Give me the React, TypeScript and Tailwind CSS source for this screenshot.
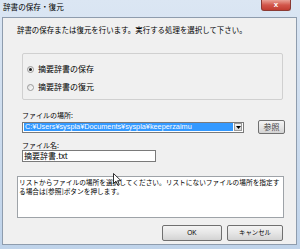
import React from "react";

const jp = { fontFamily: '"Noto Sans CJK JP", "Noto Sans", sans-serif' };
const latin = { fontFamily: '"Liberation Sans", "Noto Sans CJK JP", sans-serif' };

function Radio({ checked, label }: { checked?: boolean; label: string }) {
  return (
    <div className="flex items-center h-[10px] pl-[4px] gap-[4px]">
      <div className="w-[7px] h-[7px] rounded-full border border-[#9a9a9a] bg-gradient-to-br from-[#dcdcdc] to-[#ffffff] flex items-center justify-center">
        {checked && <div className="w-[3px] h-[3px] rounded-full bg-[#1a1a1a]" />}
      </div>
      <span className="text-[8px] leading-[10px] text-black" style={jp}>
        {label}
      </span>
    </div>
  );
}

function Button({ children, className }: { children: React.ReactNode; className?: string }) {
  return (
    <div
      className={`flex items-center justify-center rounded-[2px] border border-[#707070] bg-gradient-to-b from-[#f4f4f4] via-[#e6e6e6] to-[#d3d3d3] text-black ${className || ""}`}
    >
      {children}
    </div>
  );
}

export default function App() {
  return (
    <div className="relative w-[300px] h-[249px] overflow-hidden flex flex-col pl-[2px] pr-[3px] pb-[4px] bg-gradient-to-b from-[#dbe6f3] to-[#bfd3ea]">
      {/* Title bar */}
      <div className="h-[17px] flex items-start justify-between shrink-0">
        <span className="pt-[2px] pl-[1px] text-[7.6px] leading-[10px] text-black" style={jp}>
          辞書の保存・復元
        </span>
        <div className="mr-[6px] w-[30px] h-[11px] rounded-b-[3px] border border-t-0 border-[#8b3a33] bg-gradient-to-b from-[#e8a196] via-[#d2564b] to-[#c13c30] flex items-center justify-center">
          <span className="text-white text-[8px] leading-[8px] font-bold" style={latin}>
            x
          </span>
        </div>
      </div>

      {/* Client area */}
      <div className="flex-1 flex flex-col bg-[#f0f0f0] border border-[#8e9cad] pl-[14px]">
        <div className="mt-[7px] text-[7.45px] leading-[10px] text-black whitespace-nowrap" style={jp}>
          辞書の保存または復元を行います。実行する処理を選択して下さい。
        </div>

        <div className="ml-[5px] mt-[18px] w-[261px] h-[47px] border border-[#d0d0d0] rounded-[2px] flex flex-col pt-[10px] gap-[8px]">
          <Radio checked label="摘要辞書の保存" />
          <Radio label="摘要辞書の復元" />
        </div>

        <div className="ml-[5px] mt-[10px] text-[7px] leading-[10px] text-black" style={jp}>
          ファイルの場所:
        </div>
        <div className="ml-[5px] flex items-center h-[14px]">
          <div className="w-[222px] h-[11px] border border-[#7a7a7a] bg-white flex items-center pl-[1px] pr-[1px] gap-[1px]">
            <div className="flex-1 h-[8px] bg-[#3399ff] flex items-center pl-[1px]">
              <span className="text-white text-[7.3px] leading-[8px] whitespace-nowrap" style={latin}>
                C:¥Users¥syspla¥Documents¥syspla¥keeperzaimu
              </span>
            </div>
            <div className="w-[8px] h-[8px] border border-[#9a9a9a] bg-gradient-to-b from-[#f4f4f4] to-[#d8d8d8] flex items-center justify-center">
              <svg width="5" height="3" viewBox="0 0 5 3">
                <path d="M0 0 L5 0 L2.5 3 Z" fill="#000" />
              </svg>
            </div>
          </div>
          <Button className="ml-[14px] w-[27px] h-[14px]">
            <span className="text-[8px] leading-[10px] text-[#444]" style={jp}>
              参照
            </span>
          </Button>
        </div>

        <div className="ml-[5px] mt-[6px] text-[7px] leading-[10px] text-black" style={jp}>
          ファイル名:
        </div>
        <div className="ml-[5px] w-[134px] h-[12px] border border-[#7a7a7a] bg-white flex items-center pl-[1px]">
          <span className="text-[8px] leading-[10px] text-black whitespace-nowrap" style={jp}>
            摘要辞書.txt
          </span>
        </div>

        <div
          className="mt-[14px] w-[267px] h-[42px] border border-[#9ea3a8] bg-white pl-[1px] pt-[1px] text-[6.7px] leading-[9px] text-black whitespace-nowrap"
          style={jp}
        >
          リストからファイルの場所を選択してください。リストにないファイルの場所を指定す
          <br />
          る場合は[参照]ボタンを押します。
        </div>

        <div className="mt-[7px] flex justify-end gap-[5px] pr-[13px]">
          <Button className="w-[60px] h-[16px]">
            <span className="text-[6.5px] leading-[8px]" style={latin}>
              OK
            </span>
          </Button>
          <Button className="w-[56px] h-[16px]">
            <span className="text-[6.4px] leading-[8px]" style={jp}>
              キャンセル
            </span>
          </Button>
        </div>
      </div>

      {/* Mouse pointer */}
      <svg className="absolute left-[113px] top-[173px]" width="9" height="13" viewBox="0 0 9 13">
        <path d="M0.5 0.5 L0.5 10.5 L3 8.2 L4.8 12.2 L6.3 11.5 L4.6 7.7 L8 7.7 Z" fill="#fff" stroke="#000" strokeWidth="0.8" strokeLinejoin="round" />
      </svg>
    </div>
  );
}
